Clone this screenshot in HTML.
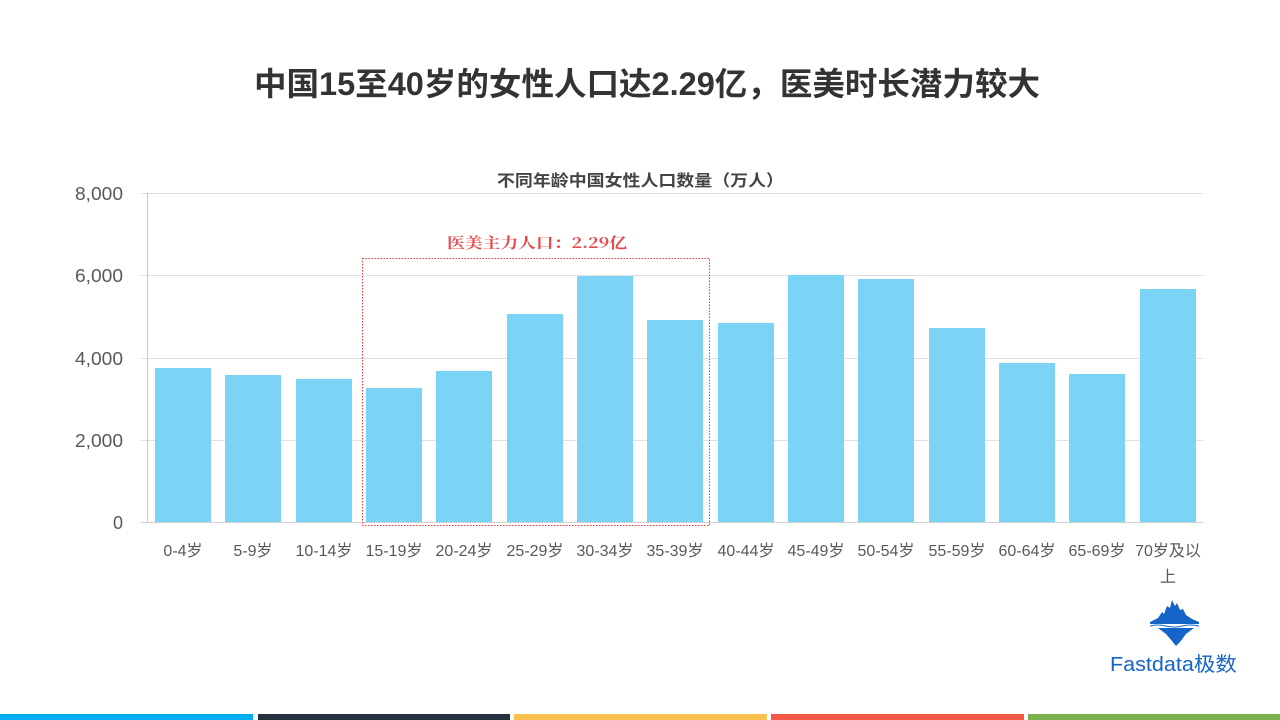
<!DOCTYPE html>
<html><head><meta charset="utf-8"><style>
html,body{margin:0;padding:0;background:#fff;width:1280px;height:720px;overflow:hidden}
svg text{font-family:"Liberation Sans","Noto Sans CJK SC",sans-serif}
</style></head><body>
<svg width="1280" height="720" viewBox="0 0 1280 720" xmlns="http://www.w3.org/2000/svg">
<text x="254" y="95" font-size="32" font-weight="bold" fill="#333" textLength="786" lengthAdjust="spacingAndGlyphs">中国15至40岁的女性人口达2.29亿，医美时长潜力较大</text>
<text x="497" y="186" font-size="16" font-weight="bold" fill="#444" textLength="287" lengthAdjust="spacingAndGlyphs">不同年龄中国女性人口数量（万人）</text>
<g stroke="#e0e0e0" stroke-width="1">
<line x1="141" y1="193.5" x2="1203" y2="193.5"/>
<line x1="141" y1="275.5" x2="1203" y2="275.5"/>
<line x1="141" y1="358.5" x2="1203" y2="358.5"/>
<line x1="141" y1="440.5" x2="1203" y2="440.5"/>
</g>
<line x1="147.5" y1="193" x2="147.5" y2="523" stroke="#c8c8c8"/>
<line x1="141" y1="522.5" x2="1203" y2="522.5" stroke="#d0d0d0"/>
<g fill="#595959" font-size="18" text-anchor="end">
<text x="123" y="200" textLength="48" lengthAdjust="spacingAndGlyphs">8,000</text>
<text x="123" y="282" textLength="48" lengthAdjust="spacingAndGlyphs">6,000</text>
<text x="123" y="365" textLength="48" lengthAdjust="spacingAndGlyphs">4,000</text>
<text x="123" y="447" textLength="48" lengthAdjust="spacingAndGlyphs">2,000</text>
<text x="123" y="529">0</text>
</g>
<g fill="#7bd3f5">
<rect x="155" y="368" width="56" height="154"/>
<rect x="225" y="375" width="56" height="147"/>
<rect x="296" y="379" width="56" height="143"/>
<rect x="366" y="388" width="56" height="134"/>
<rect x="436" y="371" width="56" height="151"/>
<rect x="507" y="314" width="56" height="208"/>
<rect x="577" y="276" width="56" height="246"/>
<rect x="647" y="320" width="56" height="202"/>
<rect x="718" y="323" width="56" height="199"/>
<rect x="788" y="275" width="56" height="247"/>
<rect x="858" y="279" width="56" height="243"/>
<rect x="929" y="328" width="56" height="194"/>
<rect x="999" y="363" width="56" height="159"/>
<rect x="1069" y="374" width="56" height="148"/>
<rect x="1140" y="289" width="56" height="233"/>
</g>
<rect x="362.5" y="258.5" width="347" height="267" fill="none" stroke="#e83a3a" stroke-width="1" stroke-dasharray="1.5,1.5"/>
<text x="447" y="248" font-size="15" font-weight="bold" fill="#e84b4b" textLength="180" lengthAdjust="spacingAndGlyphs" style="font-family:'Noto Serif CJK SC',serif">医美主力人口：2.29亿</text>
<g fill="#595959" font-size="16" text-anchor="middle">
<text x="183" y="556">0-4岁</text>
<text x="253" y="556">5-9岁</text>
<text x="324" y="556">10-14岁</text>
<text x="394" y="556">15-19岁</text>
<text x="464" y="556">20-24岁</text>
<text x="535" y="556">25-29岁</text>
<text x="605" y="556">30-34岁</text>
<text x="675" y="556">35-39岁</text>
<text x="746" y="556">40-44岁</text>
<text x="816" y="556">45-49岁</text>
<text x="886" y="556">50-54岁</text>
<text x="957" y="556">55-59岁</text>
<text x="1027" y="556">60-64岁</text>
<text x="1097" y="556">65-69岁</text>
<text x="1168" y="556">70岁及以</text>
<text x="1168" y="582">上</text>
</g>
<!-- logo -->
<g fill="#1565c8">
<path d="M1150 622 L1158 618 L1162 612 L1164 614 L1167 606 L1170 608 L1172 600 L1175 606 L1177 603 L1180 610 L1183 609 L1186 615 L1192 619 L1199 622 L1199 624 L1150 624 Z"/>
<path d="M1158 628 L1194 628 L1186 634 L1180 642 L1176 646 L1172 641 L1166 634 Z"/>
</g>
<path d="M1150 626 Q1158 624 1166 626 T1182 626 T1199 626" stroke="#1565c8" stroke-width="1" fill="none"/>
<text x="1110" y="671" font-size="20" fill="#1565c8" textLength="127" lengthAdjust="spacingAndGlyphs">Fastdata极数</text>
<rect x="0" y="714" width="253" height="6" fill="#00adef"/>
<rect x="258" y="714" width="252" height="6" fill="#25313e"/>
<rect x="514" y="714" width="253" height="6" fill="#fbc14f"/>
<rect x="771" y="714" width="253" height="6" fill="#f45a45"/>
<rect x="1028" y="714" width="252" height="6" fill="#7ab24f"/>
</svg>
</body></html>
